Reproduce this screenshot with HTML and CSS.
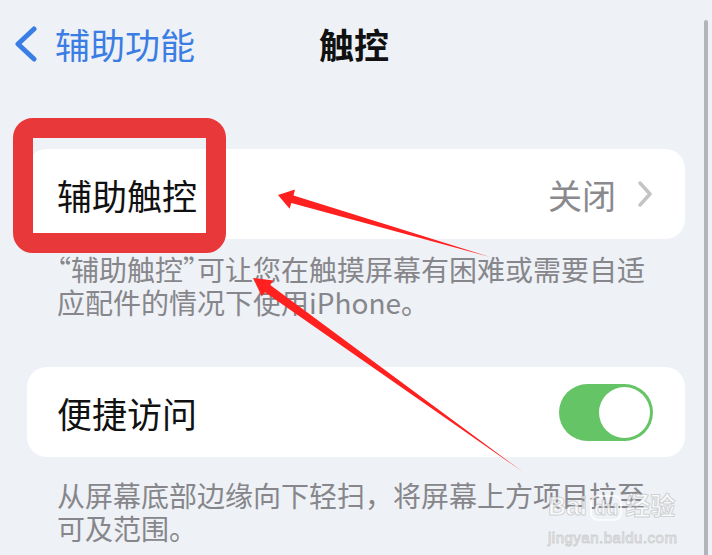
FILE: index.html
```html
<!DOCTYPE html>
<html lang="zh-CN">
  <head>
    <meta charset="UTF-8">
    <title>触控</title>
    <link rel="stylesheet" href="styles.css">
  </head>
  <body>
    <div class="screen">
      <header class="nav">
        <a class="back" href="#">
          <svg class="back-icon" width="24" height="36" viewBox="0 0 24 36">
            <polyline points="20,3 4,18 20,33" fill="none" stroke="#3a7de4" stroke-width="5" stroke-linecap="round" stroke-linejoin="round"/>
          </svg>
          <span>辅助功能</span>
        </a>
        <h1 class="title">触控</h1>
        <div></div>
      </header>

      <section class="group first">
        <div class="cell">
          <span class="label">辅助触控</span>
          <span class="value">关闭
            <svg class="chevron" width="14" height="26" viewBox="0 0 14 26">
              <polyline points="2,2 12,13 2,24" fill="none" stroke="#c4c4c7" stroke-width="3.5" stroke-linecap="round" stroke-linejoin="round"/>
            </svg>
          </span>
        </div>
        <p class="note">“辅助触控”可让您在触摸屏幕有困难或需要自适应配件的情况下使用iPhone。</p>
      </section>

      <section class="group second">
        <div class="cell">
          <span class="label">便捷访问</span>
          <span class="toggle on"><span class="knob"></span></span>
        </div>
        <p class="note">从屏幕底部边缘向下轻扫，将屏幕上方项目拉至可及范围。</p>
      </section>
    </div>

    <!-- annotations drawn over the screenshot -->
    <div class="highlight"></div>
    <svg class="arrows" width="712" height="555" viewBox="0 0 712 555">
      <polygon points="278,195 295,189.6 293.5,195.4 490,257 291.3,203 289.6,208.8" fill="#ff2020"/>
      <polygon points="253,278 273.4,280.4 270.2,284.9 523,472 265,292.2 261.8,296.6" fill="#ff2020"/>
    </svg>

    <div class="watermark">
      <div class="wm-logo">Bai<span class="wm-du">du</span>经验</div>
      <div class="wm-url">jingyan.baidu.com</div>
    </div>
    <div class="scrollbar"></div>
  </body>
</html>
```

FILE: styles.css
```css
body {
  margin: 0;
  background-color: #EEF1F5;
  font-family: "Noto Sans CJK SC", "Noto Sans", sans-serif;
  width: 712px;
  height: 555px;
  overflow: hidden;
  position: relative;
}

.screen {
  padding: 0 27px;
}

.nav {
  height: 88px;
  display: grid;
  grid-template-columns: 1fr auto 1fr;
  align-items: center;
  margin: 0 -27px;
  padding: 0 14px;
}

.back {
  display: flex;
  align-items: center;
  gap: 17px;
  color: #3a7de4;
  text-decoration: none;
  font-size: 35px;
  line-height: 40px;
}

.back-icon {
  display: block;
}

.title {
  margin: 0;
  font-size: 35px;
  font-weight: bold;
  color: #111111;
  line-height: 40px;
  padding-right: 4px;
}

.group.first {
  margin-top: 61px;
}

.group.second {
  margin-top: 48px;
}

.cell {
  height: 90px;
  background-color: #FFFFFF;
  border-radius: 20px;
  display: flex;
  align-items: center;
  justify-content: space-between;
  padding: 0 30px;
}

.label {
  font-size: 35px;
  color: #111111;
}

.value {
  display: flex;
  align-items: center;
  gap: 22px;
  font-size: 34px;
  color: #8a8a8e;
  margin-right: 3px;
}

.chevron {
  display: block;
}

.note {
  margin: 0;
  width: 600px;
  padding: 14px 0 0 30px;
  font-size: 28px;
  line-height: 33px;
  color: #86868b;
}

.first .note {
  font-feature-settings: "halt";
}

.second .note {
  padding-top: 22px;
}

.toggle {
  width: 94px;
  height: 57px;
  border-radius: 29px;
  background-color: #65c466;
  display: flex;
  align-items: center;
  justify-content: flex-end;
  padding: 3px;
  box-sizing: border-box;
  margin-right: 2px;
}

.knob {
  width: 51px;
  height: 51px;
  border-radius: 50%;
  background-color: #FFFFFF;
}

.highlight {
  position: absolute;
  left: 13px;
  top: 118px;
  width: 173px;
  height: 95px;
  border: 20px solid #e8383a;
  border-radius: 20px;
}

.arrows {
  position: absolute;
  left: 0;
  top: 0;
}

.watermark {
  position: absolute;
  left: 548px;
  top: 493px;
  white-space: nowrap;
  color: rgba(255, 255, 255, 0.7);
  -webkit-text-stroke: 1px rgba(150, 150, 150, 0.4);
  font-family: "Liberation Sans", "Noto Sans CJK SC", sans-serif;
}

.wm-logo {
  font-size: 25px;
  line-height: 26px;
  font-weight: bold;
}

.wm-du {
  display: inline-block;
  font-size: 20px;
  line-height: 22px;
  padding: 0 2px;
  margin: 0 3px;
  border-radius: 8px;
  border: 2px solid rgba(255, 255, 255, 0.7);
}

.wm-url {
  font-size: 15px;
  line-height: 18px;
  margin-top: 8px;
  letter-spacing: 0.5px;
}

.scrollbar {
  position: absolute;
  left: 704px;
  top: 20px;
  bottom: 0;
  width: 4px;
  border-radius: 2px 2px 0 0;
  background-color: #b1b4b8;
}
```
